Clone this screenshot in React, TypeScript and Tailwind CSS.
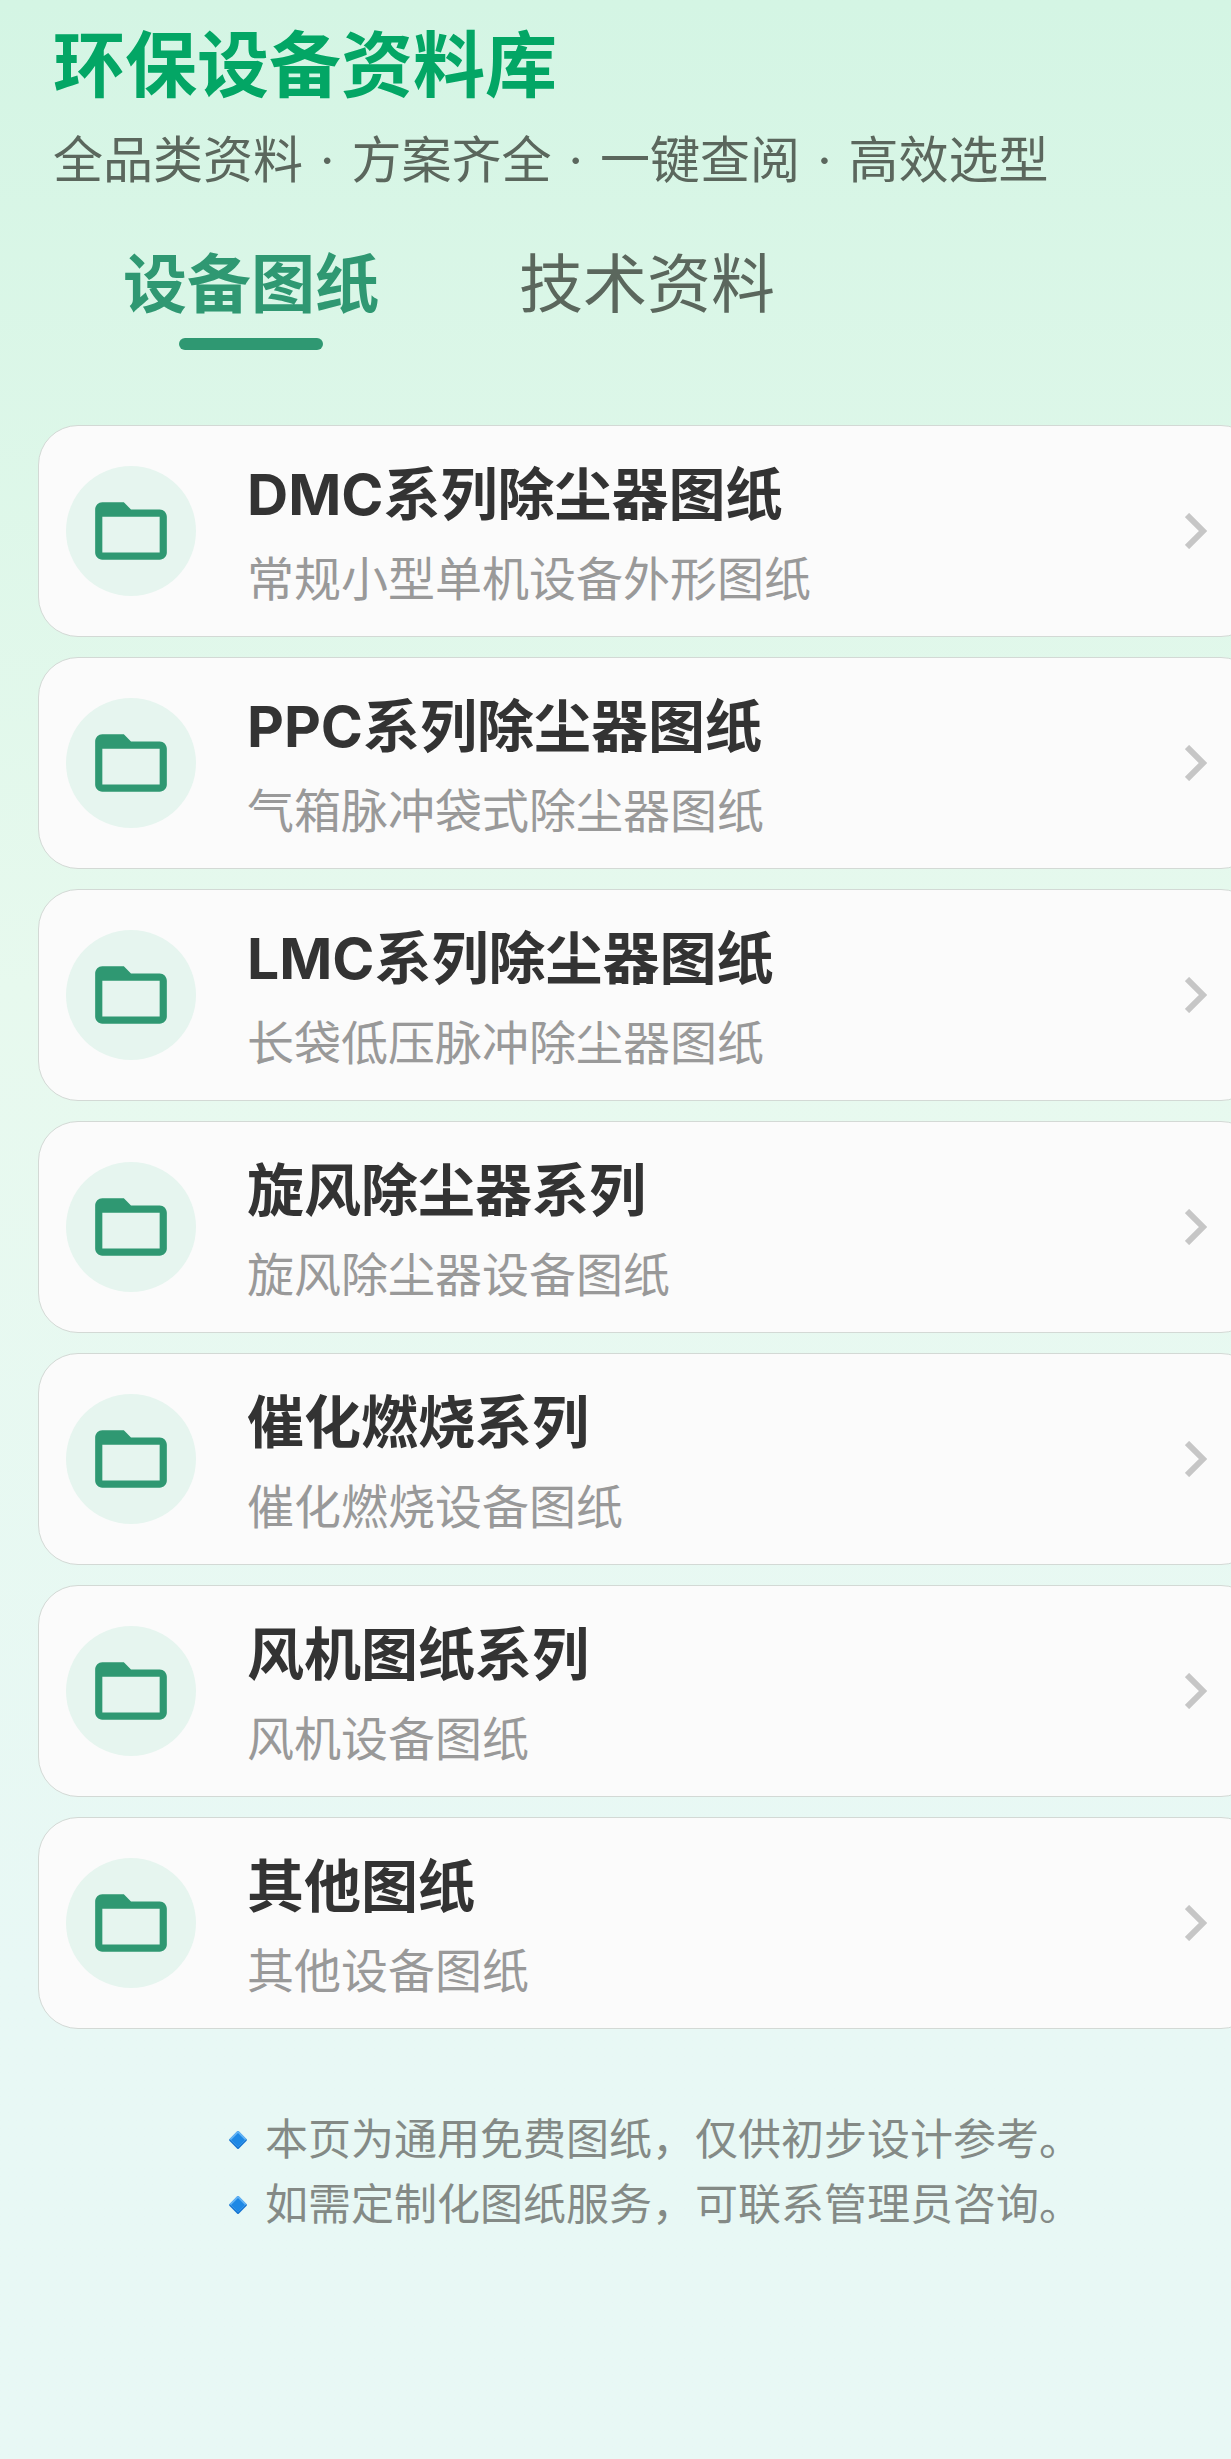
import React, { useState } from 'react';

interface Category {
  title: string;
  desc: string;
}

const FEATURES = ['全品类资料', '方案齐全', '一键查阅', '高效选型'];

const TABS = ['设备图纸', '技术资料'];

const CATEGORIES: Category[] = [
  { title: 'DMC系列除尘器图纸', desc: '常规小型单机设备外形图纸' },
  { title: 'PPC系列除尘器图纸', desc: '气箱脉冲袋式除尘器图纸' },
  { title: 'LMC系列除尘器图纸', desc: '长袋低压脉冲除尘器图纸' },
  { title: '旋风除尘器系列', desc: '旋风除尘器设备图纸' },
  { title: '催化燃烧系列', desc: '催化燃烧设备图纸' },
  { title: '风机图纸系列', desc: '风机设备图纸' },
  { title: '其他图纸', desc: '其他设备图纸' },
];

const NOTES = ['本页为通用免费图纸，仅供初步设计参考。', '如需定制化图纸服务，可联系管理员咨询。'];

function FolderIcon() {
  return (
    <svg viewBox="0 0 24 24" className="size-[86px] fill-[#2f9872]" aria-hidden="true">
      <path d="M20 6h-8l-2-2H4c-1.1 0-2 .9-2 2v12c0 1.1.9 2 2 2h16c1.1 0 2-.9 2-2V8c0-1.1-.9-2-2-2zm0 12H4V8h16v10z" />
    </svg>
  );
}

function ChevronIcon() {
  return (
    <svg viewBox="0 0 22 36" className="h-9 w-[22px] shrink-0" fill="none" aria-hidden="true">
      <path d="M2 2l16 16L2 34" stroke="#c6c6c6" strokeWidth="6" />
    </svg>
  );
}

function DiamondIcon() {
  return (
    <svg viewBox="0 0 18 18" className="size-[18px] shrink-0" aria-hidden="true">
      <path d="M8 .6q1-1 2 0L17.4 8q1 1 0 2L10 17.4q-1 1-2 0L.6 10q-1-1 0-2z" fill="#1976d2" />
      <path d="M8 .6q1-1 2 0L17.4 8 9 16 .6 8z" fill="#64b5f6" />
      <path d="M9 2l7 7-7 7-7-7z" fill="#1e88e5" />
    </svg>
  );
}

function CategoryCard({ title, desc }: Category) {
  return (
    <a
      href="#"
      className="flex h-[212px] items-center rounded-[40px] border border-[#d3d9d5] bg-[#fbfbfb] pr-[53px] pl-[27px]"
    >
      <span className="flex size-[130px] shrink-0 items-center justify-center rounded-full bg-[#e6f5ef]">
        <FolderIcon />
      </span>
      <span className="ml-[51px] flex flex-1 flex-col pt-3">
        <span className="text-[57px] leading-[84px] font-bold text-[#333333]">{title}</span>
        <span className="text-[47px] leading-[84px] text-[#999999]">{desc}</span>
      </span>
      <ChevronIcon />
    </a>
  );
}

export default function App() {
  const [activeTab, setActiveTab] = useState(0);

  return (
    <div className="min-h-screen overflow-hidden bg-linear-to-b from-[#d4f5e4] via-[#e7f9ee] via-40% to-[#e8f8f5] to-80% font-['Inter','Noto_Sans_CJK_SC',sans-serif]">
      {/* Header */}
      <header className="px-[53px] pt-[23px]">
        <h1 className="text-[72px] leading-[84px] font-bold text-[#03a665]">环保设备资料库</h1>
        <p className="mt-[17px] text-[50px] leading-[72px] text-[#5b675d]">
          {FEATURES.map((feature, index) => (
            <React.Fragment key={feature}>
              {index > 0 && <span className="mx-[3px]"> · </span>}
              {feature}
            </React.Fragment>
          ))}
        </p>
      </header>

      {/* Tabs */}
      <div role="tablist" className="mt-[46px] flex px-[53px]">
        {TABS.map((tab, index) => (
          <button
            key={tab}
            type="button"
            role="tab"
            aria-selected={index === activeTab}
            onClick={() => setActiveTab(index)}
            className="flex flex-col items-center px-[70px]"
          >
            <span
              className={
                index === activeTab
                  ? 'text-[64px] leading-[84px] font-bold text-[#2f9872]'
                  : 'text-[64px] leading-[84px] text-[#5b675d]'
              }
            >
              {tab}
            </span>
            {index === activeTab && <span className="mt-3 h-3 w-36 rounded-full bg-[#2f9872]" />}
          </button>
        ))}
      </div>

      {/* Category list */}
      <main className="mt-[75px] -mr-[30px] ml-[38px]">
        <div className="flex flex-col gap-5">
          {CATEGORIES.map((item) => (
            <CategoryCard key={item.title} title={item.title} desc={item.desc} />
          ))}
        </div>

        {/* Notes */}
        <ul className="mt-[78px] flex flex-col items-center pb-20 pl-3 text-[43px] leading-[65px] text-[#848a86]">
          {NOTES.map((note) => (
            <li key={note} className="flex items-center gap-[18px]">
              <DiamondIcon />
              {note}
            </li>
          ))}
        </ul>
      </main>
    </div>
  );
}
